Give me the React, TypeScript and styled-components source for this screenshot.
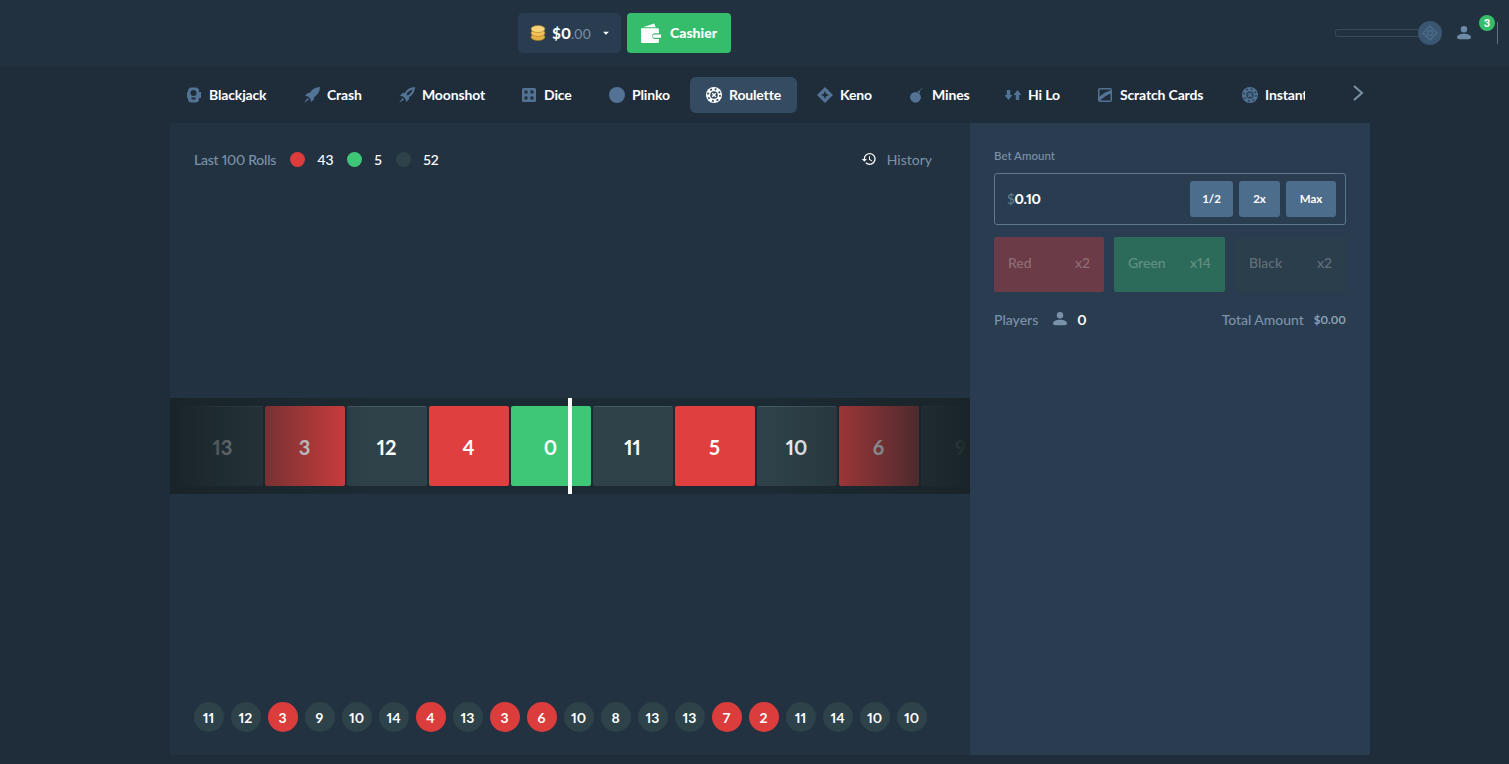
import React from 'react';
import styled, { createGlobalStyle } from 'styled-components';
import { MdHistory, MdArrowDropDown } from 'react-icons/md';

const GlobalStyle = createGlobalStyle`
  html, body {
    margin: 0;
    height: 100%;
    overflow: hidden;
    background: #1f2d3b;
    font-family: Lato, "Liberation Sans", sans-serif;
    font-variant-numeric: proportional-nums;
    color: #fff;
  }
  * { box-sizing: border-box; }
`;

const Page = styled.div`
  width: 1509px;
  height: 764px;
`;

const Header = styled.header`
  height: 67px;
  background: #22313f;
  display: flex;
  align-items: center;
  padding: 0 11px 1px 518px;
`;

const Balance = styled.div`
  width: 103px;
  height: 40px;
  margin-right: 6px;
  border-radius: 5px;
  background: #293c50;
  display: flex;
  align-items: center;
  padding-left: 12px;
  font-size: 15px;
  font-weight: 900;
  svg:first-child { margin-right: 6px; }
`;

const Cents = styled.span`
  color: #7d95ab;
  font-size: 13px;
  font-weight: 400;
`;

const Caret = styled(MdArrowDropDown)`
  margin-left: 8px;
  color: #fff;
`;

const CashierButton = styled.button`
  width: 104px;
  height: 40px;
  border: 0;
  border-radius: 4px;
  background: #36bd6c;
  color: #fff;
  font: 900 14px Lato, sans-serif;
  display: flex;
  align-items: center;
  gap: 9px;
  padding: 0 0 0 13px;
`;

const CashierLabel = styled.span`
  padding-bottom: 2px;
`;

const HeaderRight = styled.div`
  margin-left: auto;
  display: flex;
  align-items: center;
`;

const Slider = styled.div`
  width: 107px;
  height: 24px;
  display: flex;
  align-items: center;
  margin-right: 12px;
`;

const SliderTrack = styled.div`
  width: 85px;
  height: 8px;
  border: 1px solid #34495b;
  border-right: 0;
  border-radius: 3px 0 0 3px;
`;

const SliderKnob = styled.div`
  width: 24px;
  height: 24px;
  margin-left: -2px;
  border-radius: 50%;
  background: #3a5671;
  display: grid;
  place-items: center;
`;

const Account = styled.div`
  position: relative;
  width: 42px;
  height: 22px;
  color: #6d8ba8;
  display: flex;
  align-items: center;
  padding-left: 2px;
`;

const Badge = styled.span`
  position: absolute;
  left: 25px;
  top: -7px;
  width: 16px;
  height: 16px;
  border-radius: 50%;
  background: #36bd6c;
  color: #fff;
  font-size: 11px;
  font-weight: 900;
  line-height: 16px;
  text-align: center;
`;

const HeaderRule = styled.div`
  width: 1px;
  height: 22px;
  margin-left: 1px;
  background: #5f7386;
`;

const NavBar = styled.nav`
  width: 1200px;
  height: 56px;
  margin-left: 170px;
  display: flex;
  align-items: center;
`;

const NavScroll = styled.div`
  width: 1135px;
  overflow: hidden;
  display: flex;
  gap: 4px;
`;

const NavItem = styled.a<{ $active?: boolean; $width: number }>`
  flex: none;
  width: ${p => p.$width}px;
  height: 36px;
  padding-left: 16px;
  border-radius: 6px;
  background: ${p => (p.$active ? '#344b62' : 'transparent')};
  color: #fff;
  font-size: 14px;
  font-weight: 700;
  letter-spacing: -0.15px;
  display: flex;
  align-items: center;
  gap: 7px;
  white-space: nowrap;
  svg { flex: none; color: ${p => (p.$active ? '#fff' : '#527394')}; }
`;

const NavLabel = styled.span`
  padding-bottom: 2px;
`;

const NavNext = styled.svg`
  margin: 0 0 4px 48px;
  color: #7f92a3;
`;

const Main = styled.main`
  width: 1200px;
  height: 632px;
  margin-left: 170px;
  display: grid;
  grid-template-columns: 800px 400px;
`;

const Game = styled.section`
  background: #233241;
  display: flex;
  flex-direction: column;
`;

const StatsRow = styled.div`
  height: 67px;
  padding: 23px 38px 18px 24px;
  display: flex;
  align-items: flex-start;
  justify-content: space-between;
`;

const Stats = styled.div`
  height: 26px;
  display: flex;
  align-items: center;
  font-size: 14px;
  font-weight: 500;
`;

const MutedLabel = styled.span`
  color: #7b93a8;
  white-space: nowrap;
  letter-spacing: -0.25px;
`;

const StatDot = styled.i<{ $color: string }>`
  width: 15px;
  height: 15px;
  margin: 1px 12px 0 14px;
  border-radius: 50%;
  background: ${p => p.$color};
`;

const StatCount = styled.span<{ $width: number }>`
  width: ${p => p.$width}px;
  color: #fff;
`;

const HistoryLink = styled.a`
  height: 26px;
  display: flex;
  align-items: center;
  gap: 10px;
  color: #7b93a8;
  font-size: 14px;
  svg { color: #fff; }
`;

const ReelArea = styled.div`
  flex: 1;
  display: flex;
  align-items: center;
`;

const Reel = styled.div`
  position: relative;
  width: 800px;
  height: 96px;
  padding: 8px 0 8px 13px;
  background: #1c2a33;
  overflow: hidden;
  display: flex;
  gap: 2px;
  &::before, &::after {
    content: '';
    position: absolute;
    top: 0;
    bottom: 0;
    width: 200px;
    z-index: 1;
  }
  &::before { left: 0; background: linear-gradient(to right, #1a2428, rgba(26, 36, 40, 0)); }
  &::after { right: 0; background: linear-gradient(to left, #1a2428, rgba(26, 36, 40, 0)); }
`;

const tileColors = { red: '#df3f3f', green: '#3fc778', gray: '#2f4249' };
type TileColor = keyof typeof tileColors;

const Tile = styled.div<{ $color: TileColor }>`
  flex: none;
  width: 80px;
  height: 80px;
  padding-right: 1px;
  border-radius: 2px;
  border-top: 1px solid ${p => (p.$color === 'gray' ? '#445962' : 'transparent')};
  background: ${p => tileColors[p.$color]};
  display: grid;
  place-items: center;
  font-size: 20px;
  font-weight: 700;
`;

const Marker = styled.div`
  position: absolute;
  left: 398px;
  top: 0;
  z-index: 2;
  width: 4px;
  height: 96px;
  background: #fff;
`;

const RecentRow = styled.div`
  height: 53px;
  padding-left: 24px;
  display: flex;
  gap: 7px;
`;

const RecentRoll = styled.div<{ $color: TileColor }>`
  width: 30px;
  height: 30px;
  padding-right: 1px;
  border-radius: 50%;
  background: ${p => (p.$color === 'red' ? '#db3c3c' : '#2e4249')};
  display: grid;
  place-items: center;
  font-size: 14px;
  font-weight: 700;
`;

const BetPanel = styled.aside`
  background: #2a3c50;
  padding: 24px;
`;

const BetLabel = styled.div`
  height: 26px;
  padding-top: 2px;
  color: #7b93a8;
  font-size: 11.5px;
  font-weight: 500;
`;

const BetInput = styled.div`
  height: 52px;
  padding: 0 9px 0 12px;
  border: 1px solid #5d788f;
  border-radius: 3px;
  display: flex;
  align-items: center;
  gap: 6px;
`;

const BetValue = styled.div`
  flex: 1;
  padding-bottom: 2px;
  font-size: 14px;
  font-weight: 900;
  letter-spacing: -0.3px;
  span { color: #62808f; font-weight: 400; }
`;

const QuickButton = styled.button<{ $width: number }>`
  width: ${p => p.$width}px;
  height: 36px;
  padding: 0 0 2px;
  border: 0;
  border-radius: 3px;
  background: #4d6d8c;
  color: #fff;
  font: 700 11.5px Lato, sans-serif;
`;

const ColorGrid = styled.div`
  margin-top: 12px;
  display: grid;
  grid-template-columns: 110px 111px 111px;
  gap: 10px;
`;

const ColorBet = styled.div<{ $bg: string }>`
  height: 55px;
  padding: 0 14px 4px;
  border-radius: 2px;
  background: ${p => p.$bg};
  color: rgba(255, 255, 255, 0.27);
  font-size: 14px;
  font-weight: 500;
  display: flex;
  align-items: center;
  justify-content: space-between;
`;

const TotalsRow = styled.div`
  height: 54px;
  display: flex;
  align-items: center;
  font-size: 14px;
  font-weight: 500;
`;

const PlayerLabel = styled(MutedLabel)`
  letter-spacing: 0;
`;

const PlayerIconBox = styled.span`
  display: flex;
  margin: 0 9px 0 14px;
  color: #7b93a8;
`;

const PlayerCount = styled.span`
  font-weight: 700;
`;

const TotalLabel = styled(MutedLabel)`
  margin-left: auto;
  letter-spacing: -0.05px;
`;

const TotalValue = styled.span`
  margin-left: 10px;
  color: #8da3b6;
  font-size: 11.5px;
  font-weight: 700;
`;

// nav icons, drawn on a 16 box
const Svg = ({ children }: { children: React.ReactNode }) => (
  <svg width="16" height="16" viewBox="0 0 16 16" fill="currentColor">{children}</svg>
);

const PersonIcon = ({ size }: { size: number }) => (
  <svg width={size} height={size} viewBox="0 0 16 16" fill="currentColor">
    <circle cx="8" cy="4.200" r="3.200" />
    <path d="M8 8.800c3.800 0 7 1.300 7 3.300 0 1.400-1 2.200-2.500 2.200h-9C2 14.300 1 13.500 1 12.100c0-2 3.200-3.300 7-3.300z" />
  </svg>
);

const BlackjackIcon = () => (
  <Svg>
    <rect x="2" y="0.500" width="11" height="15" rx="3.500" />
    <path d="M1 5h2v6H1zM13 5h2v6h-2z" />
    <circle cx="7.500" cy="6" r="3" fill="#1f2d3b" />
    <path d="M5.500 10.500h4v2h-4z" fill="#1f2d3b" />
  </Svg>
);
const CrashIcon = () => (
  <Svg>
    <path d="M16 0c-4.500.2-8 2.200-10 5.700L3.800 6 1 8.800l3 .7 2.500 2.500.7 3 2.800-2.800.3-2.200C13.800 8 15.800 4.500 16 0z" />
    <path d="M3.500 11l1.500 1.500L0 16z" />
  </Svg>
);
const MoonshotIcon = () => (
  <Svg>
    <path
      fillRule="evenodd"
      d="M16 0c-4.500.2-8 2.200-10 5.700L3.800 6 1 8.800l3 .7 2.500 2.500.7 3 2.800-2.800.3-2.200C13.800 8 15.800 4.500 16 0zM13.500 2.500c-2.800.7-4.600 2.300-6 4.800l1.200 1.200c2.500-1.400 4.100-3.200 4.800-6z"
    />
    <path d="M3.500 11l1.500 1.500L0 16z" />
  </Svg>
);
const DiceIcon = () => (
  <Svg>
    <path
      fillRule="evenodd"
      d="M2.500 1h11A1.500 1.500 0 0 1 15 2.500v11a1.500 1.500 0 0 1-1.500 1.500h-11A1.500 1.500 0 0 1 1 13.500v-11A1.500 1.500 0 0 1 2.500 1zM3.500 3.500v3h3v-3zm6 0v3h3v-3zm-6 6v3h3v-3zm6 0v3h3v-3z"
    />
  </Svg>
);
const PlinkoIcon = () => (
  <Svg>
    <circle cx="8" cy="8" r="8" />
  </Svg>
);
// roulette style wheel: notched ring, crossed hub; gap takes the colour behind it
const WheelIcon = ({ gap }: { gap: string }) => (
  <Svg>
    <circle cx="8" cy="8" r="8" />
    <circle cx="8" cy="8" r="6" fill="none" stroke={gap} strokeWidth="1.800" strokeDasharray="1.900 2.812" />
    <circle cx="8" cy="8" r="3.800" fill={gap} />
    <path d="M6.200 6.200l3.600 3.600m0-3.600l-3.600 3.600" stroke="currentColor" strokeWidth="1.300" />
  </Svg>
);
const KenoIcon = () => (
  <Svg>
    <path d="M8 0l8 8-8 8-8-8z" />
    <path d="M8 4l1.200 2.800L12 8 9.200 9.200 8 12 6.800 9.200 4 8l2.800-1.200z" fill="#1f2d3b" />
  </Svg>
);
const MinesIcon = () => (
  <Svg>
    <circle cx="6.500" cy="10.300" r="5.400" />
    <path d="M8.500 4.500l1.500-1.300 1.500 1.500-1.300 1.500z" />
    <path d="M11 3l2.500-2" stroke="currentColor" strokeWidth="1" opacity="0.7" />
  </Svg>
);
const HiLoIcon = () => (
  <Svg>
    <path d="M1.800 3h3.400v5H7.500L3.500 13-.5 8h2.300zM10.800 13h3.400V8h2.300l-4-5-4 5h2.300z" />
  </Svg>
);
const ScratchIcon = () => (
  <Svg>
    <path
      fillRule="evenodd"
      d="M3 1h10a2 2 0 0 1 2 2v10a2 2 0 0 1-2 2H3a2 2 0 0 1-2-2V3a2 2 0 0 1 2-2zm0 1.500c-.3 0-.5.2-.5.5v6.500L8 5.500l5.500-2v-1zM13.500 6.500L8 9.500l-5 4h10.500z"
    />
  </Svg>
);

const CoinsIcon = () => (
  <svg width="16" height="16" viewBox="0 0 16 16" stroke="#a97d26" strokeWidth="0.600">
    <ellipse cx="8" cy="12" rx="7" ry="3.500" fill="#e3b144" />
    <ellipse cx="8" cy="8" rx="7" ry="3.500" fill="#f3c259" />
    <ellipse cx="8" cy="4" rx="7" ry="3.500" fill="#f9d477" />
  </svg>
);

const WalletIcon = () => (
  <svg width="21" height="21" viewBox="0 0 20 20" fill="#fff">
    <path d="M1.500 4.500L13.500 0.500l1.500 3.500H3z" />
    <path
      fillRule="evenodd"
      d="M1 5h16a1 1 0 0 1 1 1v3.800h-4.500a2.800 2.800 0 0 0 0 5.400H18V18a1 1 0 0 1-1 1H2a1 1 0 0 1-1-1zM13.500 11H20v3h-6.500a1.500 1.500 0 0 1 0-3z"
    />
  </svg>
);

const KnobIcon = () => (
  <svg width="16" height="16" viewBox="0 0 16 16" fill="none" stroke="#4b6a88" strokeWidth="1.500">
    <path d="M8 1l7 7-7 7-7-7z" />
    <circle cx="8" cy="8" r="2.500" />
  </svg>
);

const navItems = [
  { label: 'Blackjack', icon: <BlackjackIcon />, width: 114 },
  { label: 'Crash', icon: <CrashIcon />, width: 91 },
  { label: 'Moonshot', icon: <MoonshotIcon />, width: 118 },
  { label: 'Dice', icon: <DiceIcon />, width: 84 },
  { label: 'Plinko', icon: <PlinkoIcon />, width: 93 },
  { label: 'Roulette', icon: <WheelIcon gap="#344b62" />, width: 107, active: true },
  { label: 'Keno', icon: <KenoIcon />, width: 88 },
  { label: 'Mines', icon: <MinesIcon />, width: 92 },
  { label: 'Hi Lo', icon: <HiLoIcon />, width: 88 },
  { label: 'Scratch Cards', icon: <ScratchIcon />, width: 141 },
  { label: 'Instant', icon: <WheelIcon gap="#2d435a" />, width: 100 },
];

const tiles: { n: number; c: TileColor }[] = [
  { n: 13, c: 'gray' },
  { n: 3, c: 'red' },
  { n: 12, c: 'gray' },
  { n: 4, c: 'red' },
  { n: 0, c: 'green' },
  { n: 11, c: 'gray' },
  { n: 5, c: 'red' },
  { n: 10, c: 'gray' },
  { n: 6, c: 'red' },
  { n: 9, c: 'gray' },
];

const recent = [11, 12, 3, 9, 10, 14, 4, 13, 3, 6, 10, 8, 13, 13, 7, 2, 11, 14, 10, 10];

export default function App() {
  return (
    <Page>
      <GlobalStyle />
      <Header>
        <Balance>
          <CoinsIcon />
          <span>$0<Cents>.00</Cents></span>
          <Caret size={14} />
        </Balance>
        <CashierButton>
          <WalletIcon />
          <CashierLabel>Cashier</CashierLabel>
        </CashierButton>
        <HeaderRight>
          <Slider>
            <SliderTrack />
            <SliderKnob><KnobIcon /></SliderKnob>
          </Slider>
          <Account>
            <PersonIcon size={16} />
            <Badge>3</Badge>
          </Account>
          <HeaderRule />
        </HeaderRight>
      </Header>

      <NavBar>
        <NavScroll>
          {navItems.map(item => (
            <NavItem key={item.label} $active={item.active} $width={item.width}>
              {item.icon}
              <NavLabel>{item.label}</NavLabel>
            </NavItem>
          ))}
        </NavScroll>
        <NavNext width="11" height="16" viewBox="0 0 11 16" fill="none" stroke="currentColor" strokeWidth="2">
          <path d="M1 1l8 7-8 7" />
        </NavNext>
      </NavBar>

      <Main>
        <Game>
          <StatsRow>
            <Stats>
              <MutedLabel>Last 100 Rolls</MutedLabel>
              <StatDot $color="#dd3c3c" />
              <StatCount $width={16}>43</StatCount>
              <StatDot $color="#3fc778" />
              <StatCount $width={8}>5</StatCount>
              <StatDot $color="#2e4249" />
              <StatCount $width={16}>52</StatCount>
            </Stats>
            <HistoryLink>
              <MdHistory size={16} />
              History
            </HistoryLink>
          </StatsRow>

          <ReelArea>
            <Reel>
              {tiles.map((t, i) => (
                <Tile key={i} $color={t.c}>{t.n}</Tile>
              ))}
              <Marker />
            </Reel>
          </ReelArea>

          <RecentRow>
            {recent.map((n, i) => (
              <RecentRoll key={i} $color={[3, 4, 6, 7, 2].includes(n) ? 'red' : 'gray'}>{n}</RecentRoll>
            ))}
          </RecentRow>
        </Game>

        <BetPanel>
          <BetLabel>Bet Amount</BetLabel>
          <BetInput>
            <BetValue><span>$</span>0.10</BetValue>
            <QuickButton $width={43}>1/2</QuickButton>
            <QuickButton $width={41}>2x</QuickButton>
            <QuickButton $width={50}>Max</QuickButton>
          </BetInput>
          <ColorGrid>
            <ColorBet $bg="#6b3b47"><span>Red</span><span>x2</span></ColorBet>
            <ColorBet $bg="#2c6a5a"><span>Green</span><span>x14</span></ColorBet>
            <ColorBet $bg="#2b3e4c"><span>Black</span><span>x2</span></ColorBet>
          </ColorGrid>
          <TotalsRow>
            <PlayerLabel>Players</PlayerLabel>
            <PlayerIconBox><PersonIcon size={16} /></PlayerIconBox>
            <PlayerCount>0</PlayerCount>
            <TotalLabel>Total Amount</TotalLabel>
            <TotalValue>$0.00</TotalValue>
          </TotalsRow>
        </BetPanel>
      </Main>
    </Page>
  );
}
